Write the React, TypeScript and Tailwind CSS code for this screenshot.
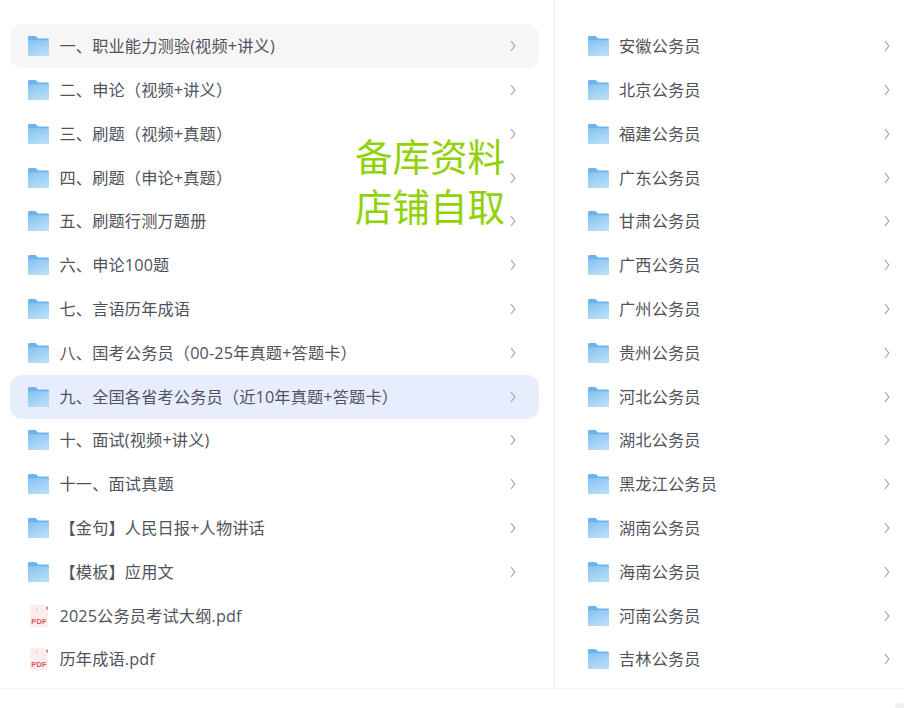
import React from "react";

const left = [
  "一、职业能力测验(视频+讲义)",
  "二、申论（视频+讲义）",
  "三、刷题（视频+真题）",
  "四、刷题（申论+真题）",
  "五、刷题行测万题册",
  "六、申论100题",
  "七、言语历年成语",
  "八、国考公务员（00-25年真题+答题卡）",
  "九、全国各省考公务员（近10年真题+答题卡）",
  "十、面试(视频+讲义)",
  "十一、面试真题",
  "【金句】人民日报+人物讲话",
  "【模板】应用文",
  "2025公务员考试大纲.pdf",
  "历年成语.pdf",
];
const right = ["安徽公务员","北京公务员","福建公务员","广东公务员","甘肃公务员","广西公务员","广州公务员","贵州公务员","河北公务员","湖北公务员","黑龙江公务员","湖南公务员","海南公务员","河南公务员","吉林公务员"];

function Folder({ id }: { id: string }) {
  return (
    <svg width="21" height="20" viewBox="0 0 21 20" className="shrink-0">
      <defs>
        <linearGradient id={id} x1="0" y1="0" x2="0.5" y2="1">
          <stop offset="0" stopColor="#84c2f1" />
          <stop offset="1" stopColor="#b6dcf8" />
        </linearGradient>
      </defs>
      <path d="M0 1.5C0 .7.7 0 1.5 0h5.6c.5 0 .9.2 1.2.6L10 2.4h9.5c.8 0 1.5.7 1.5 1.5V18.5c0 .8-.7 1.5-1.5 1.5h-18C.7 20 0 19.3 0 18.5Z" fill="#6db3ec" />
      <path d="M0 4.2h21v14.3c0 .8-.7 1.5-1.5 1.5h-18C.7 20 0 19.3 0 18.5Z" fill={`url(#${id})`} />
    </svg>
  );
}

function Pdf() {
  return (
    <svg width="18" height="22" viewBox="0 0 18 22" className="shrink-0">
      <path d="M1 0h13l4 4v17a1 1 0 0 1-1 1H1a1 1 0 0 1-1-1V1a1 1 0 0 1 1-1Z" fill="#fbeeee" />
      <rect x="16.5" y="1.5" width="1.2" height="3" fill="#d9444a" />
      <rect x="6" y="3" width="2" height="3" fill="#eed9d9" />
      <text x="9" y="19" textAnchor="middle" fontSize="7.5" fontWeight="700" fill="#e0565a" fontFamily="'Liberation Sans', sans-serif">PDF</text>
    </svg>
  );
}

function Chevron() {
  return (
    <svg width="8" height="14" viewBox="0 0 8 14" fill="none" className="shrink-0">
      <path d="M2 2 5.8 7 2 12" stroke="#a2a4a8" strokeWidth="1.2" />
    </svg>
  );
}

export default function App() {
  return (
    <div
      className="relative w-[904px] h-[708px] overflow-hidden bg-white text-[16.2px] tracking-[0.15px] text-[#50535c]"
      style={{ fontFamily: "'Open Sans', 'Noto Sans CJK SC', sans-serif" }}
    >
      <div className="flex h-[689px] border-b border-[#f6f6f7]">
        <div className="w-[555px] shrink-0 border-r border-[#ededef] pt-[24.4px] pl-2.5 pr-[15px]">
          {left.map((t, i) => (
            <div
              key={t}
              className={`flex items-center h-[43.8px] rounded-xl pl-[18px] pr-[22px] ${i === 0 ? "bg-[#f6f6f7]" : ""} ${i === 8 ? "bg-[#e8edfd]" : ""}`}
            >
              <div className="w-[21px] flex justify-center shrink-0">
                {t.endsWith(".pdf") ? <Pdf /> : <Folder id={`l${i}`} />}
              </div>
              <span className="ml-[10.5px] flex-1 whitespace-nowrap leading-none">{t}</span>
              {!t.endsWith(".pdf") && <Chevron />}
            </div>
          ))}
        </div>
        <div className="flex-1 pt-[24.4px] pl-[33px] pr-[13px]">
          {right.map((t, i) => (
            <div key={t} className="flex items-center h-[43.8px]">
              <Folder id={`r${i}`} />
              <span className="ml-2.5 flex-1 whitespace-nowrap leading-none">{t}</span>
              <Chevron />
            </div>
          ))}
        </div>
      </div>
      <div className="absolute left-[355px] top-[132px] text-[37.5px] tracking-normal leading-[50px] text-[#90d208]">
        <div>备库资料</div>
        <div>店铺自取</div>
      </div>
      <div className="absolute right-0 bottom-0 w-[9px] h-[5px] bg-[#f0f0f1] rounded-tl-sm" />
    </div>
  );
}
